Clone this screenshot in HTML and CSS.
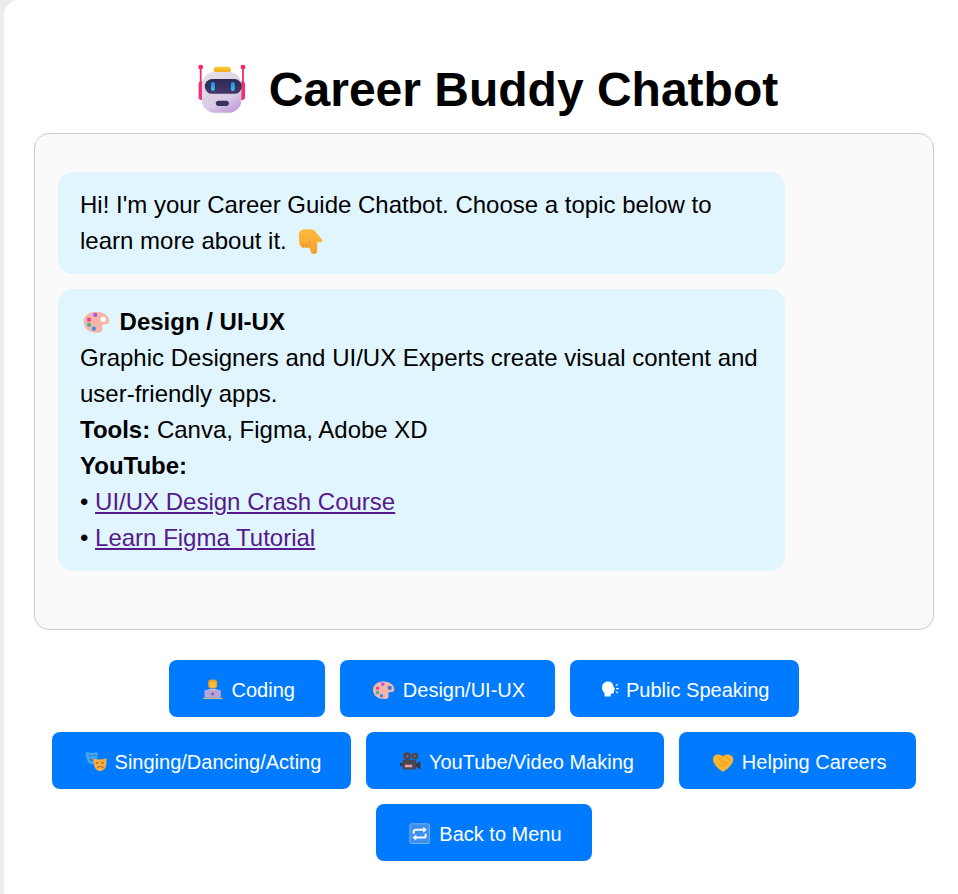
FILE: index.html
```html
<!DOCTYPE html>
<html lang="en">
<head>
<meta charset="utf-8">
<title>Career Buddy Chatbot</title>
<link rel="stylesheet" href="styles.css">
</head>
<body>
<main class="page">
  <h1 class="title"><svg class="emoji" viewBox="0 0 32 32" aria-hidden="true">
      <defs>
        <linearGradient id="head" x1="0.2" y1="0" x2="0.7" y2="1"><stop offset="0" stop-color="#e6dee8"/><stop offset="0.7" stop-color="#d9cae4"/><stop offset="1" stop-color="#c29ede"/></linearGradient>
        <linearGradient id="eye" x1="0" y1="0" x2="0" y2="1"><stop offset="0" stop-color="#1a86e8"/><stop offset="1" stop-color="#38c8f2"/></linearGradient>
        <linearGradient id="visor" x1="0" y1="0" x2="0" y2="1"><stop offset="0" stop-color="#2c2a55"/><stop offset="1" stop-color="#453768"/></linearGradient>
        <linearGradient id="cap" x1="0" y1="0" x2="0" y2="1"><stop offset="0" stop-color="#fbcb36"/><stop offset="1" stop-color="#eda81c"/></linearGradient>
        <linearGradient id="hand" x1="0" y1="0" x2="0" y2="1"><stop offset="0" stop-color="#fdbc3e"/><stop offset="1" stop-color="#f8a030"/></linearGradient>
      </defs>
      <path d="M5.200 6v7M25.800 6v7" stroke="#f0306e" stroke-width="0.9"/>
      <circle cx="5.200" cy="5.400" r="1.200" fill="#f5286a"/><circle cx="25.800" cy="5.400" r="1.200" fill="#f5286a"/>
      <rect x="4.200" y="12.400" width="3" height="9" rx="1.200" fill="#ef2f72"/><rect x="23.800" y="12.400" width="3" height="9" rx="1.200" fill="#ef2f72"/>
      <rect x="11.500" y="5.200" width="8.400" height="3" rx="1.500" fill="url(#cap)"/>
      <rect x="5.800" y="7.800" width="19.200" height="19.800" rx="6" fill="url(#head)"/>
      <rect x="7.200" y="11.200" width="18" height="7.200" rx="3.600" fill="url(#visor)"/>
      <rect x="10.200" y="12.600" width="1.900" height="4.400" rx="0.950" fill="url(#eye)"/><rect x="19.900" y="12.600" width="1.900" height="4.400" rx="0.950" fill="url(#eye)"/>
      <rect x="12.600" y="21.800" width="6.300" height="2.500" rx="1.250" fill="#37305e"/>
    </svg> Career Buddy Chatbot</h1>

  <section class="chat">
    <div class="msg">Hi! I'm your Career Guide Chatbot. Choose a topic below to learn more about it. <svg class="emoji" viewBox="-1 -0.500 34 34" aria-hidden="true">
        <path d="M5 11C5 7 8 5 12 5h5c4 0 6 3 8 6l3.500 4c1.500 2 .5 3.500-1.500 3.500h-3v9c0 2-1.500 3-3.500 3S17 29 17 27l-.5-3H10c-3 0-4.500-3-4.500-6z" fill="url(#hand)"/>
        <path d="M9.500 19.500v4M13 19.500v4.200M16.500 17v7" stroke="#e98a2e" stroke-width="0.900" fill="none"/>
      </svg></div>
    <div class="msg"><svg class="emoji" viewBox="0 0 32 32" aria-hidden="true">
        <path d="M15 6.500C22 6 28.500 10 28.500 15.500c0 2.500-2 3.500-4 3.300-2.300-.2-3.700 1-2.900 3.300.9 2.700-.6 4.600-4 4.900C10 27.300 3.700 23.500 3.500 16.500 3.400 10.500 8.500 7 15 6.500z" fill="#f7b5a8"/>
        <circle cx="22.500" cy="14" r="2.500" fill="#fff"/>
        <rect x="7" y="12.500" width="3.600" height="3.600" rx="0.800" fill="#f23d94"/>
        <rect x="13" y="7.800" width="3.600" height="3.600" rx="0.800" fill="#a855ea"/>
        <rect x="7" y="17.500" width="3.600" height="3.600" rx="0.800" fill="#35b5a8"/>
        <circle cx="13.500" cy="23" r="2" fill="#3b8be8"/>
      </svg> <b>Design / UI-UX</b><br>Graphic Designers and UI/UX Experts create visual content and user-friendly apps.<br><b>Tools:</b> Canva, Figma, Adobe XD<br><b>YouTube:</b><br>• <a class="link" href="#a">UI/UX Design Crash Course</a><br>• <a class="link" href="#b">Learn Figma Tutorial</a></div>
  </section>

  <nav class="topics">
    <button class="topic"><svg class="emoji" viewBox="0 0 32 32" aria-hidden="true">
        <rect x="10.700" y="4" width="10.600" height="10.500" rx="4" fill="#eda21e"/>
        <rect x="12.300" y="6.800" width="7.400" height="7" rx="2.600" fill="#f8bb3a"/>
        <path d="M8.500 17c1-2.500 14-2.500 15 0v2h-15z" fill="#d9c8e8"/>
        <rect x="6.500" y="16.500" width="19" height="9" rx="1.200" fill="#b9a4da"/>
        <rect x="14.500" y="19.500" width="3" height="3" fill="#7563a4"/>
        <rect x="4.700" y="25.500" width="22.600" height="1.300" fill="#d8c86a"/>
      </svg> Coding</button>
    <button class="topic"><svg class="emoji" viewBox="0 0 32 32" aria-hidden="true">
        <path d="M15 6.500C22 6 28.500 10 28.500 15.500c0 2.500-2 3.500-4 3.300-2.300-.2-3.700 1-2.900 3.300.9 2.700-.6 4.600-4 4.900C10 27.300 3.700 23.500 3.500 16.500 3.400 10.500 8.500 7 15 6.500z" fill="#f7b5a8"/>
        <circle cx="23" cy="14" r="2.500" fill="#2a7fe8"/>
        <rect x="7" y="12.500" width="3.600" height="3.600" rx="0.800" fill="#f23d94"/>
        <rect x="13" y="7.800" width="3.600" height="3.600" rx="0.800" fill="#a855ea"/>
        <rect x="7" y="17.500" width="3.600" height="3.600" rx="0.800" fill="#35b5a8"/>
        <circle cx="13.500" cy="23" r="2" fill="#3b8be8"/>
      </svg> Design/UI-UX</button>
    <button class="topic"><svg class="emoji narrow" viewBox="0 0 24 32" aria-hidden="true">
        <path d="M2.400 13.500C2.400 9 5.800 6.400 9.400 6.400c3.600 0 6 2.100 6.300 5.400l1.900 3.700c.3.600-.2 1-1.200 1.100v2.200c0 1.300-1 2-2.300 2h-1.500V24H5.400v-3.800C3.400 18.700 2.400 16.300 2.400 13.500z" fill="#fff"/>
        <path d="M18.500 11.500l2.500-2M19 14.800h3.200M18.500 18l2.500 2" stroke="#fff" stroke-width="1.300"/>
      </svg> Public Speaking</button>
    <button class="topic"><svg class="emoji" viewBox="0 0 32 32" aria-hidden="true">
        <path d="M4.700 4.500c4 1.500 9 1.500 13.100-.5.500 3.500.5 7-.5 10-1 3.300-3.500 5.500-6 5-3-.5-5-3-5.900-6.500C4.700 10 4.400 7 4.700 4.500z" fill="#46a4ee"/>
        <path d="M7.800 9.500c1-.8 2-.8 3 0M13 9c1-.8 2-.8 3 0M9 13c2 2 4 2 6 0" stroke="#1f72d0" stroke-width="1.200" fill="none"/>
        <path d="M13.500 12.300c4.500 1.700 10 1.500 14.900-.3.500 3.800.3 7-.7 10-1 3-3.600 5-6.700 5-3 0-5.300-2-6.400-5-1.200-3.400-1.500-6.500-1.100-9.700z" fill="#f9ad45"/>
        <path d="M16.300 17c1 .8 2 .8 3 .1M22.500 17.100c1 .7 2 .7 3-.1M17.800 23.500c1.900-2.500 5.500-2.500 7.400 0" stroke="#a8602a" stroke-width="1.300" fill="none"/>
      </svg> Singing/Dancing/Acting</button>
    <button class="topic"><svg class="emoji" viewBox="0 0 32 32" aria-hidden="true">
        <circle cx="13" cy="9.500" r="4.500" fill="#4a4453"/><circle cx="22" cy="9.500" r="4" fill="#4a4453"/>
        <circle cx="13" cy="9.500" r="1.500" fill="#6e6680"/><circle cx="22" cy="9.500" r="1.300" fill="#6e6680"/>
        <rect x="7.500" y="14" width="16" height="11" rx="1.500" fill="#4a4453"/>
        <rect x="10.500" y="19.500" width="8.500" height="3" fill="#e8a0a8"/>
        <path d="M23.500 18l5-2.500v9.500l-5-3z" fill="#3a3543"/>
        <rect x="4.700" y="17.500" width="2.800" height="3.500" fill="#3a3543"/>
      </svg> YouTube/Video Making</button>
    <button class="topic"><svg class="emoji" viewBox="0 0 32 32" aria-hidden="true">
        <path d="M4.700 13c0-3.500 2.800-5.500 5.800-5.500 2.500 0 4 1 5.500 2 1.500-1 3-2 5.500-2 3.500 0 6.900 2 6.900 5.500 0 6-7.400 12-11.900 14.700C11 25 4.700 19 4.700 13z" fill="#fbb52e"/>
        <path d="M10.500 14l5.500-4c2-1 3.500 0 5 1.500l5 5M14 14.500l5 3.500M11.500 18.500l4.500 4.500M15 17.500l4.500 4M18.500 15.500l4.500 4" stroke="#e8901c" stroke-width="0.900" fill="none"/>
      </svg> Helping Careers</button>
    <button class="topic"><svg class="emoji" viewBox="0 0 32 32" aria-hidden="true">
        <rect x="4.500" y="4.500" width="23" height="23" rx="2.500" fill="#3f90ee"/>
        <rect x="4.500" y="4.500" width="23" height="23" rx="2.500" fill="none" stroke="#6fb0f6" stroke-width="1.200"/>
        <path d="M9 16v-2a2.500 2.500 0 0 1 2.500-2.500H21M23 16v2a2.500 2.500 0 0 1-2.500 2.500H11" stroke="#f2f8ff" stroke-width="2.400" fill="none"/>
        <path d="M20 8l4.500 3.500-4.500 3.500zM12 17l-4.500 3.500 4.500 3.500z" fill="#f2f8ff"/>
      </svg> Back to Menu</button>
  </nav>
</main>
</body>
</html>
```

FILE: styles.css
```css
* {
  box-sizing: border-box;
}

html,
body {
  margin: 0;
  height: 100%;
  overflow: hidden;
}

body {
  background: #ececec;
  font-family: "Liberation Sans", Arial, sans-serif;
  color: #000;
}

.page {
  width: 960px;
  min-height: 100%;
  margin-left: 4px;
  padding: 54px 30px 30px;
  background: #fff;
  border-radius: 15px 0 0 0;
}

.title {
  margin: 0 0 7px;
  font-size: 48px;
  line-height: 72px;
  font-weight: 700;
  text-align: center;
}

.emoji {
  display: inline-block;
  width: 1.37em;
  height: 1.37em;
  vertical-align: -0.33em;
}

.emoji.narrow {
  width: 1.02em;
}

.chat {
  display: flex;
  flex-direction: column;
  gap: 15px;
  height: 497px;
  padding: 38px 23px;
  background: #fafafa;
  border: 1px solid #ccc;
  border-radius: 15px;
}

.msg {
  width: 727px;
  padding: 15px 22px;
  font-size: 24px;
  line-height: 36px;
  background: #e1f5fe;
  border-radius: 15px;
}

.link {
  color: #551a8b;
}

.topics {
  display: flex;
  flex-wrap: wrap;
  justify-content: center;
  gap: 15px;
  margin-top: 30px;
}

.topic {
  padding: 15px 30px 12px;
  font-family: inherit;
  font-size: 20px;
  line-height: 30px;
  color: #fff;
  background: #007bff;
  border: 0;
  border-radius: 8px;
  white-space: nowrap;
}
```
